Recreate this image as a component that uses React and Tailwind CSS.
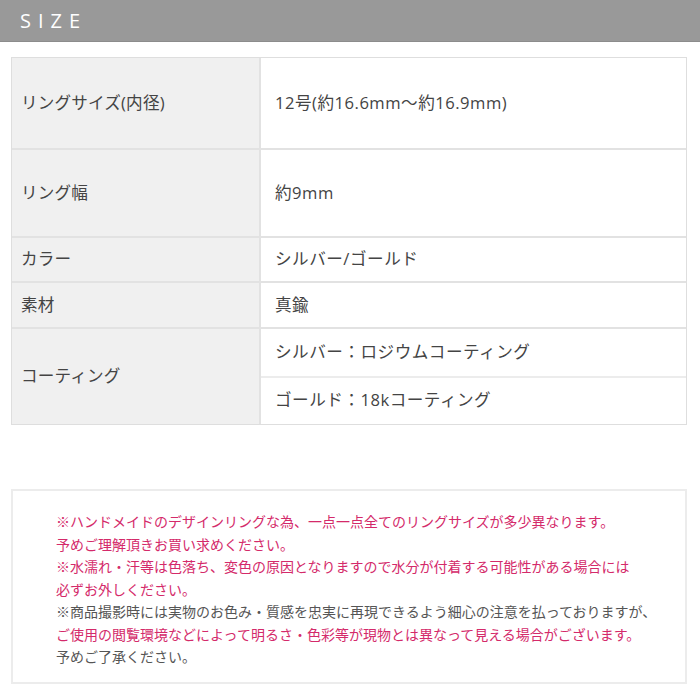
import React from 'react';

const rows = [
  { label: 'リングサイズ(内径)', values: ['12号(約16.6mm〜約16.9mm)'], h: 'h-[90px]' },
  { label: 'リング幅', values: ['約9mm'], h: 'h-[88px]' },
  { label: 'カラー', values: ['シルバー/ゴールド'], h: 'h-[45px]' },
  { label: '素材', values: ['真鍮'], h: 'h-[46px]' },
  { label: 'コーティング', values: ['シルバー：ロジウムコーティング', 'ゴールド：18kコーティング'], h: 'h-[97px]' },
];

const notes = [
  { text: '※ハンドメイドのデザインリングな為、一点一点全てのリングサイズが多少異なります。', pink: true },
  { text: '予めご理解頂きお買い求めください。', pink: true },
  { text: '※水濡れ・汗等は色落ち、変色の原因となりますので水分が付着する可能性がある場合には', pink: true },
  { text: '必ずお外しください。', pink: true },
  { text: '※商品撮影時には実物のお色み・質感を忠実に再現できるよう細心の注意を払っておりますが、', pink: false },
  { text: 'ご使用の閲覧環境などによって明るさ・色彩等が現物とは異なって見える場合がございます。', pink: true },
  { text: '予めご了承ください。', pink: false },
];

export default function App() {
  return (
    <div className="w-[700px] h-[700px] bg-white font-['Open_Sans','Noto_Sans_CJK_JP',sans-serif] text-[#444]">
      {/* 見出し */}
      <div className="h-[42px] bg-[#999999] border-b border-[#8c8c8c] flex items-center pl-[20px]">
        <span className="text-white text-[20px] tracking-[0.35em]">SIZE</span>
      </div>

      {/* スペック表 */}
      <div className="mx-[11px] mt-[15px] w-[676px] border border-[#dedede]">
        {rows.map((row, i) => (
          <div key={i} className={`flex ${row.h} ${i > 0 ? 'border-t-2 border-[#e2e2e2]' : ''}`}>
            <div className="w-[249px] bg-[#f0f0f0] border-r-2 border-[#e2e2e2] flex items-center pl-[9px] text-[16.6px] tracking-[0.01em]">
              {row.label}
            </div>
            <div className="flex-1 flex flex-col">
              {row.values.map((v, j) => (
                <div key={j} className={`flex-1 flex items-center pl-[14px] text-[16.6px] tracking-[0.03em] ${j > 0 ? 'border-t-2 border-[#ececec]' : ''}`}>
                  {v}
                </div>
              ))}
            </div>
          </div>
        ))}
      </div>

      {/* 注意書き */}
      <div className="mx-[11px] mt-[64px] w-[676px] h-[195px] border-2 border-[#ececec] pt-[20px] pl-[43px]">
        {notes.map((n, i) => (
          <p key={i} className={`text-[14px] leading-[22.5px] ${n.pink ? 'text-[#d42a6a]' : 'text-[#555]'}`}>
            {n.text}
          </p>
        ))}
      </div>
    </div>
  );
}
